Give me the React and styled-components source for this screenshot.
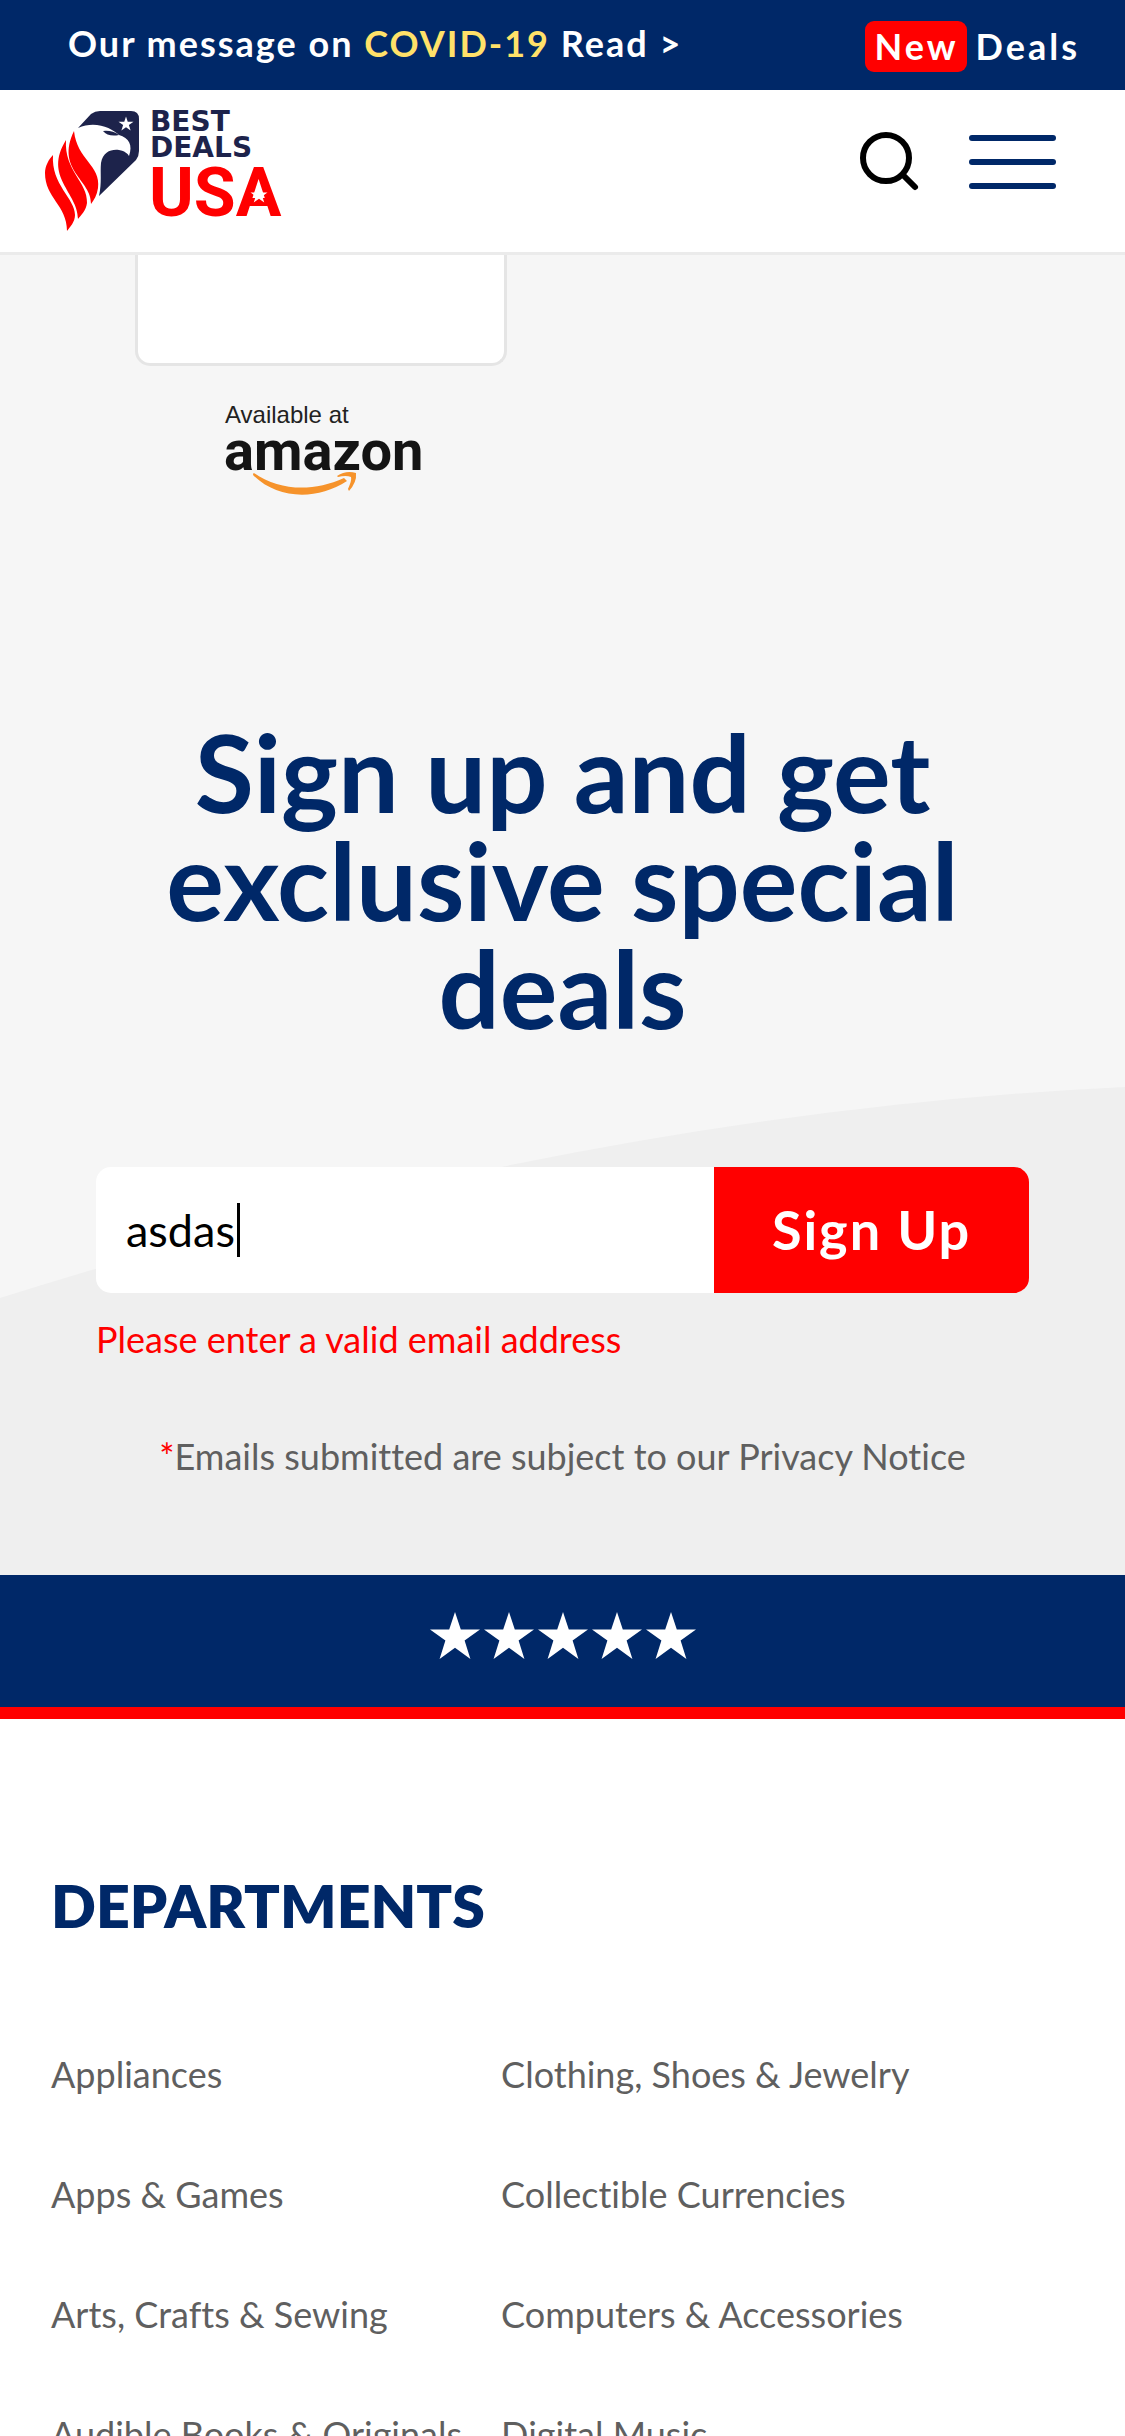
import React, { useState } from "react";
import styled, { createGlobalStyle } from "styled-components";

const navy = "#002868";
const red = "#ff0000";
const gray = "#5f5f5f";

const GlobalStyle = createGlobalStyle`
  *, *::before, *::after { box-sizing: border-box; }
  body {
    margin: 0;
    background: #fff;
    color: ${gray};
    font-family: Lato, "Liberation Sans", sans-serif;
    font-size: 36px;
    line-height: 43px;
    font-variant-ligatures: none;
  }
  a { color: inherit; text-decoration: none; }
  svg { overflow: visible; }
`;

const TopBar = styled.div`
  display: flex;
  align-items: center;
  justify-content: space-between;
  height: 90px;
  padding: 0 45px 0 68px;
  background: ${navy};
  color: #fff;
  font-weight: 700;
`;

const Notice = styled.a`
  padding-bottom: 4px;
  letter-spacing: 2px;
`;

const Highlight = styled.span`
  color: #ffe169;
`;

const DealsLink = styled.a`
  display: flex;
  align-items: center;
  gap: 9px;
  padding-top: 3px;
  letter-spacing: 3px;
`;

const Badge = styled.span`
  padding: 4px 8px 4px 10px;
  border-radius: 9px;
  background: ${red};
`;

const Header = styled.header`
  display: flex;
  align-items: center;
  justify-content: space-between;
  height: 165px;
  padding: 0 69px 0 45px;
  border-bottom: 3px solid #ebebeb;
  background: #fff;
`;

const LogoLink = styled.a`
  display: flex;
`;

const Actions = styled.div`
  display: flex;
  align-items: center;
  gap: 51px;
  padding-bottom: 18px;
`;

const IconButton = styled.button`
  display: flex;
  flex-direction: column;
  gap: 18px;
  padding: 0;
  border: 0;
  background: none;
  cursor: pointer;
`;

const MenuBar = styled.span`
  width: 87px;
  height: 6px;
  border-radius: 3px;
  background: ${navy};
`;

const Main = styled.main`
  position: relative;
  background: #f6f6f6;
`;

const Swoosh = styled.svg`
  position: absolute;
  left: 0;
  bottom: 0;
  width: 100%;
  height: 488px;
`;

const Product = styled.section`
  display: flex;
  flex-direction: column;
  align-items: center;
  width: 372px;
  margin-left: 135px;
`;

const ProductCard = styled.div`
  width: 100%;
  height: 111px;
  border: 3px solid #e5e5e5;
  border-top: 0;
  border-radius: 0 0 15px 15px;
  background: #fff;
`;

const StoreLink = styled.a`
  display: flex;
  margin-top: 34px;
`;

const SignUp = styled.section`
  position: relative;
  padding: 219px 96px 97px;
`;

const Title = styled.h2`
  margin: 0 0 126px;
  color: ${navy};
  font-size: 108px;
  font-weight: 700;
  line-height: 108px;
  text-align: center;
`;

const Form = styled.form`
  display: flex;
  height: 126px;
  border-radius: 15px;
  overflow: hidden;
`;

const Field = styled.label`
  display: flex;
  flex: 1;
  align-items: center;
  gap: 2px;
  min-width: 0;
  padding: 0 30px;
  background: #fff;
  cursor: text;
`;

const EmailInput = styled.input`
  field-sizing: content;
  padding: 0;
  border: 0;
  outline: 0;
  background: none;
  color: #000;
  caret-color: transparent;
  font: 45px/54px Lato, "Liberation Sans", sans-serif;
`;

const Caret = styled.span`
  width: 3px;
  height: 54px;
  background: #000;
`;

const SubmitButton = styled.button`
  width: 315px;
  padding: 0;
  border: 0;
  background: ${red};
  color: #fff;
  font: 700 54px/66px Lato, "Liberation Sans", sans-serif;
  letter-spacing: 2px;
  cursor: pointer;
`;

const ErrorText = styled.p`
  margin: 25px 0 0;
  color: ${red};
`;

const Privacy = styled.p`
  margin: 74px 0 0;
  text-align: center;
`;

const Asterisk = styled.span`
  color: ${red};
`;

const StarBand = styled.div`
  display: flex;
  justify-content: center;
  gap: 4px;
  height: 144px;
  padding-top: 37px;
  border-bottom: 12px solid ${red};
  background: ${navy};
`;

const Departments = styled.footer`
  padding: 151px 51px 60px;
`;

const DepartmentsTitle = styled.h3`
  margin: 0 0 111px;
  color: ${navy};
  font-size: 59px;
  font-weight: 800;
  line-height: 72px;
`;

const DepartmentList = styled.ul`
  display: grid;
  grid-template-columns: 44% 1fr;
  row-gap: 77px;
  margin: 0;
  padding: 0;
  list-style: none;
  white-space: nowrap;
`;

const departments = [
  "Appliances", "Clothing, Shoes & Jewelry",
  "Apps & Games", "Collectible Currencies",
  "Arts, Crafts & Sewing", "Computers & Accessories",
  "Audible Books & Originals", "Digital Music",
];

const starPoints = "0,-25 5.8,-7.6 25,-7.6 9.6,3.4 15.4,22 0,10.8 -15.4,22 -9.6,3.4 -25,-7.6 -5.8,-7.6";

function Logo() {
  return (
    <svg width="240" height="124" viewBox="0 0 240 124" role="img" aria-label="Best Deals USA">
      <path d="M33 19 L46 5 Q50 2 55 2 H86 Q94 2 94 10 V42 Q94 47 91 51 L54 87 C57 73 55 64 56 54 C58 43 66 40 74 41 C80 42 83 45 84 47 C88 36 84 29 74 26 C67 19 50 11 33 19 Z" fill="#1d234b" />
      <path d="M58 22 Q67 21 74 26 Q63 28 58 22 Z" fill="#1d234b" />
      <polygon points={starPoints} transform="translate(81 15) scale(0.3)" fill="#fff" />
      <g fill={red}>
        <path d="M29 22 C32 51 56 56 53 79 C52 86 49 91 46 95 C47 71 10 61 29 22 Z" />
        <path d="M21 31 C19 62 43 73 42 94 C41 102 36 106 33 110 C33 83 -2 68 21 31 Z" />
        <path d="M8 46 C6 76 30 89 30 106 C30 113 25 118 22 122 C22 96 0 89 0 64 C0 57 4 50 8 46 Z" />
      </g>
      <g fontWeight="700">
        <text x="105" y="22" fill="#1d234b" fontFamily="DejaVu Sans, sans-serif" fontSize="28">BEST</text>
        <text x="105" y="48" fill="#1d234b" fontFamily="DejaVu Sans, sans-serif" fontSize="28">DEALS</text>
        <text x="104" y="107" fill={red} fontFamily="Roboto, sans-serif" fontSize="68">USA</text>
      </g>
      <polygon points={starPoints} transform="translate(214 86) scale(0.34)" fill="#fff" />
    </svg>
  );
}

function AmazonMark() {
  return (
    <svg width="200" height="98" viewBox="0 0 200 98" role="img" aria-label="Available at amazon">
      <text x="4" y="23" fontFamily="Liberation Sans, sans-serif" fontSize="24" fill="#222">Available at</text>
      <text x="3" y="70" fontFamily="Roboto, sans-serif" fontWeight="700" fontSize="56" fill="#141414">amazon</text>
      <g fill="#f6932b" transform="translate(4 0)">
        <path d="M29 73 C55 91 88 92 119 78 L122 81 C91 101 52 99 28 75 Q28 73 29 73 Z" />
        <path d="M112 76 Q121 70 131 73 Q132 82 124 91 L123 89 Q127 80 126 77 Q121 75 113 77 Z" />
      </g>
    </svg>
  );
}

export default function App() {
  const [email, setEmail] = useState("asdas");
  return (
    <>
      <GlobalStyle />
      <TopBar>
        <Notice href="#covid">Our message on <Highlight>COVID-19</Highlight> Read &gt;</Notice>
        <DealsLink href="#deals"><Badge>New</Badge>Deals</DealsLink>
      </TopBar>
      <Header>
        <LogoLink href="#home"><Logo /></LogoLink>
        <Actions>
          <IconButton type="button" aria-label="Search">
            <svg width="60" height="60" viewBox="0 0 60 60" fill="none" stroke="#000" strokeWidth="6" strokeLinecap="round">
              <circle cx="28" cy="26" r="23" />
              <path d="M45 43 L57 55" />
            </svg>
          </IconButton>
          <IconButton type="button" aria-label="Menu">
            <MenuBar /><MenuBar /><MenuBar />
          </IconButton>
        </Actions>
      </Header>
      <Main>
        <Swoosh viewBox="0 0 1125 488" preserveAspectRatio="none" aria-hidden="true">
          <path d="M0 211 Q590 25 1125 0 V488 H0 Z" fill="#efefef" />
        </Swoosh>
        <Product>
          <ProductCard />
          <StoreLink href="#amazon"><AmazonMark /></StoreLink>
        </Product>
        <SignUp>
          <Title>Sign up and get exclusive special deals</Title>
          <Form noValidate onSubmit={(e) => e.preventDefault()}>
            <Field>
              <EmailInput type="text" inputMode="email" aria-label="Email address" value={email} onChange={(e) => setEmail(e.target.value)} />
              <Caret />
            </Field>
            <SubmitButton type="submit">Sign Up</SubmitButton>
          </Form>
          <ErrorText role="alert">Please enter a valid email address</ErrorText>
          <Privacy><Asterisk>*</Asterisk>Emails submitted are subject to our <a href="#privacy">Privacy Notice</a></Privacy>
        </SignUp>
      </Main>
      <StarBand>
        {[1, 2, 3, 4, 5].map((n) => (
          <svg key={n} width="50" height="50" viewBox="-25 -25 50 50" aria-hidden="true">
            <polygon points={starPoints} fill="#fff" />
          </svg>
        ))}
      </StarBand>
      <Departments>
        <DepartmentsTitle>DEPARTMENTS</DepartmentsTitle>
        <DepartmentList>
          {departments.map((name) => (
            <li key={name}><a href="#departments">{name}</a></li>
          ))}
        </DepartmentList>
      </Departments>
    </>
  );
}
